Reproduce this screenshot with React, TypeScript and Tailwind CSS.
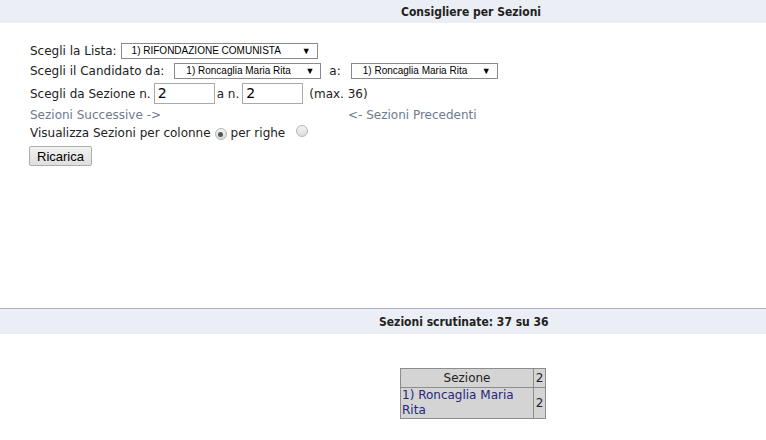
import React from 'react';

const Select = ({ value, width, textPad }: { value: string; width: string; textPad: string }) => (
  <div
    className={`${width} h-[16px] border border-[#8a8a8a] bg-white flex items-center justify-between pr-[6px] ${textPad} text-[10px] text-black font-['Liberation_Sans',Arial,sans-serif] leading-none`}
  >
    <span>{value}</span>
    <span className="text-[9px]">▼</span>
  </div>
);

const Radio = ({ checked }: { checked?: boolean }) => (
  <span className="inline-flex w-[12px] h-[12px] rounded-full border border-[#b5b5b5] bg-gradient-to-b from-[#f4f4f4] to-[#dcdcdc] items-center justify-center">
    {checked && <span className="w-[5px] h-[5px] rounded-full bg-[#555]" />}
  </span>
);

const App = () => {
  return (
    <div className="w-[766px] h-[440px] bg-white font-['DejaVu_Sans',Verdana,sans-serif] text-[12px] text-[#222] overflow-hidden">
      {/* Title band */}
      <div className="h-[23px] bg-[#eceef5] flex items-center pl-[401px]">
        <span className="font-bold text-[12px] text-[#222] font-['DejaVu_Sans_Condensed','DejaVu_Sans',sans-serif]">
          Consigliere per Sezioni
        </span>
      </div>

      {/* Form */}
      <div className="pl-[30px] pt-[18px]">
        <div className="h-[20px] flex items-center">
          <span>Scegli la Lista:</span>
          <div className="ml-[4px]">
            <Select value="1) RIFONDAZIONE COMUNISTA" width="w-[197px]" textPad="pl-[10px]" />
          </div>
        </div>
        <div className="h-[20px] flex items-center">
          <span>Scegli il Candidato da:</span>
          <div className="ml-[10px]">
            <Select value="1) Roncaglia Maria Rita" width="w-[147px]" textPad="pl-[11px]" />
          </div>
          <span className="ml-[8px]">a:</span>
          <div className="ml-[10px]">
            <Select value="1) Roncaglia Maria Rita" width="w-[147px]" textPad="pl-[11px]" />
          </div>
        </div>
        <div className="h-[25px] flex items-center">
          <span>Scegli da Sezione n.</span>
          <div className="ml-[3px] w-[61px] h-[21px] border border-[#a9a9a9] flex items-center pl-[3px] text-[14px] text-black">2</div>
          <span className="ml-[2px]">a n.</span>
          <div className="ml-[3px] w-[61px] h-[21px] border border-[#a9a9a9] flex items-center pl-[3px] text-[14px] text-black">2</div>
          <span className="ml-[6px]">(max. 36)</span>
        </div>
        <div className="h-[18px] flex items-center text-[#6e7a8e]">
          <span className="w-[318px]">Sezioni Successive -&gt;</span>
          <span>&lt;- Sezioni Precedenti</span>
        </div>
        <div className="h-[17px] flex items-center">
          <span>Visualizza Sezioni per colonne</span>
          <span className="ml-[4px]"><Radio checked /></span>
          <span className="ml-[4px]">per righe</span>
          <span className="ml-[11px]"><Radio /></span>
        </div>
        <div className="mt-[5px] -ml-[1px]">
          <button className="w-[63px] h-[20px] border border-[#adadad] rounded-[2px] bg-gradient-to-b from-[#f2f2f2] to-[#dedede] text-[13px] text-black font-['Liberation_Sans',Arial,sans-serif] leading-none">
            Ricarica
          </button>
        </div>
      </div>

      {/* Status band */}
      <div className="mt-[142px] border-t border-[#a8afc4] h-[26px] bg-[#eceef5] flex items-center pl-[379px]">
        <span className="font-bold text-[12px] text-[#222] font-['DejaVu_Sans_Condensed','DejaVu_Sans',sans-serif]">
          Sezioni scrutinate: 37 su 36
        </span>
      </div>

      {/* Results table */}
      <div className="pt-[34px] pl-[400px]">
        <table className="border-collapse border border-[#6f6f6f] bg-[#d4d4d4] text-[12px]">
          <tbody>
            <tr>
              <td className="w-[133px] h-[19px] border border-[#8c8c8c] text-center leading-[15px]">Sezione</td>
              <td className="w-[12px] border border-[#8c8c8c] text-center leading-[15px]">2</td>
            </tr>
            <tr>
              <td className="w-[133px] border border-[#8c8c8c] text-[#27277a] leading-[15px] px-[1px] py-[0px]">
                1) Roncaglia Maria Rita
              </td>
              <td className="w-[12px] border border-[#8c8c8c] text-center leading-[15px]">2</td>
            </tr>
          </tbody>
        </table>
      </div>
    </div>
  );
};

export default App;
